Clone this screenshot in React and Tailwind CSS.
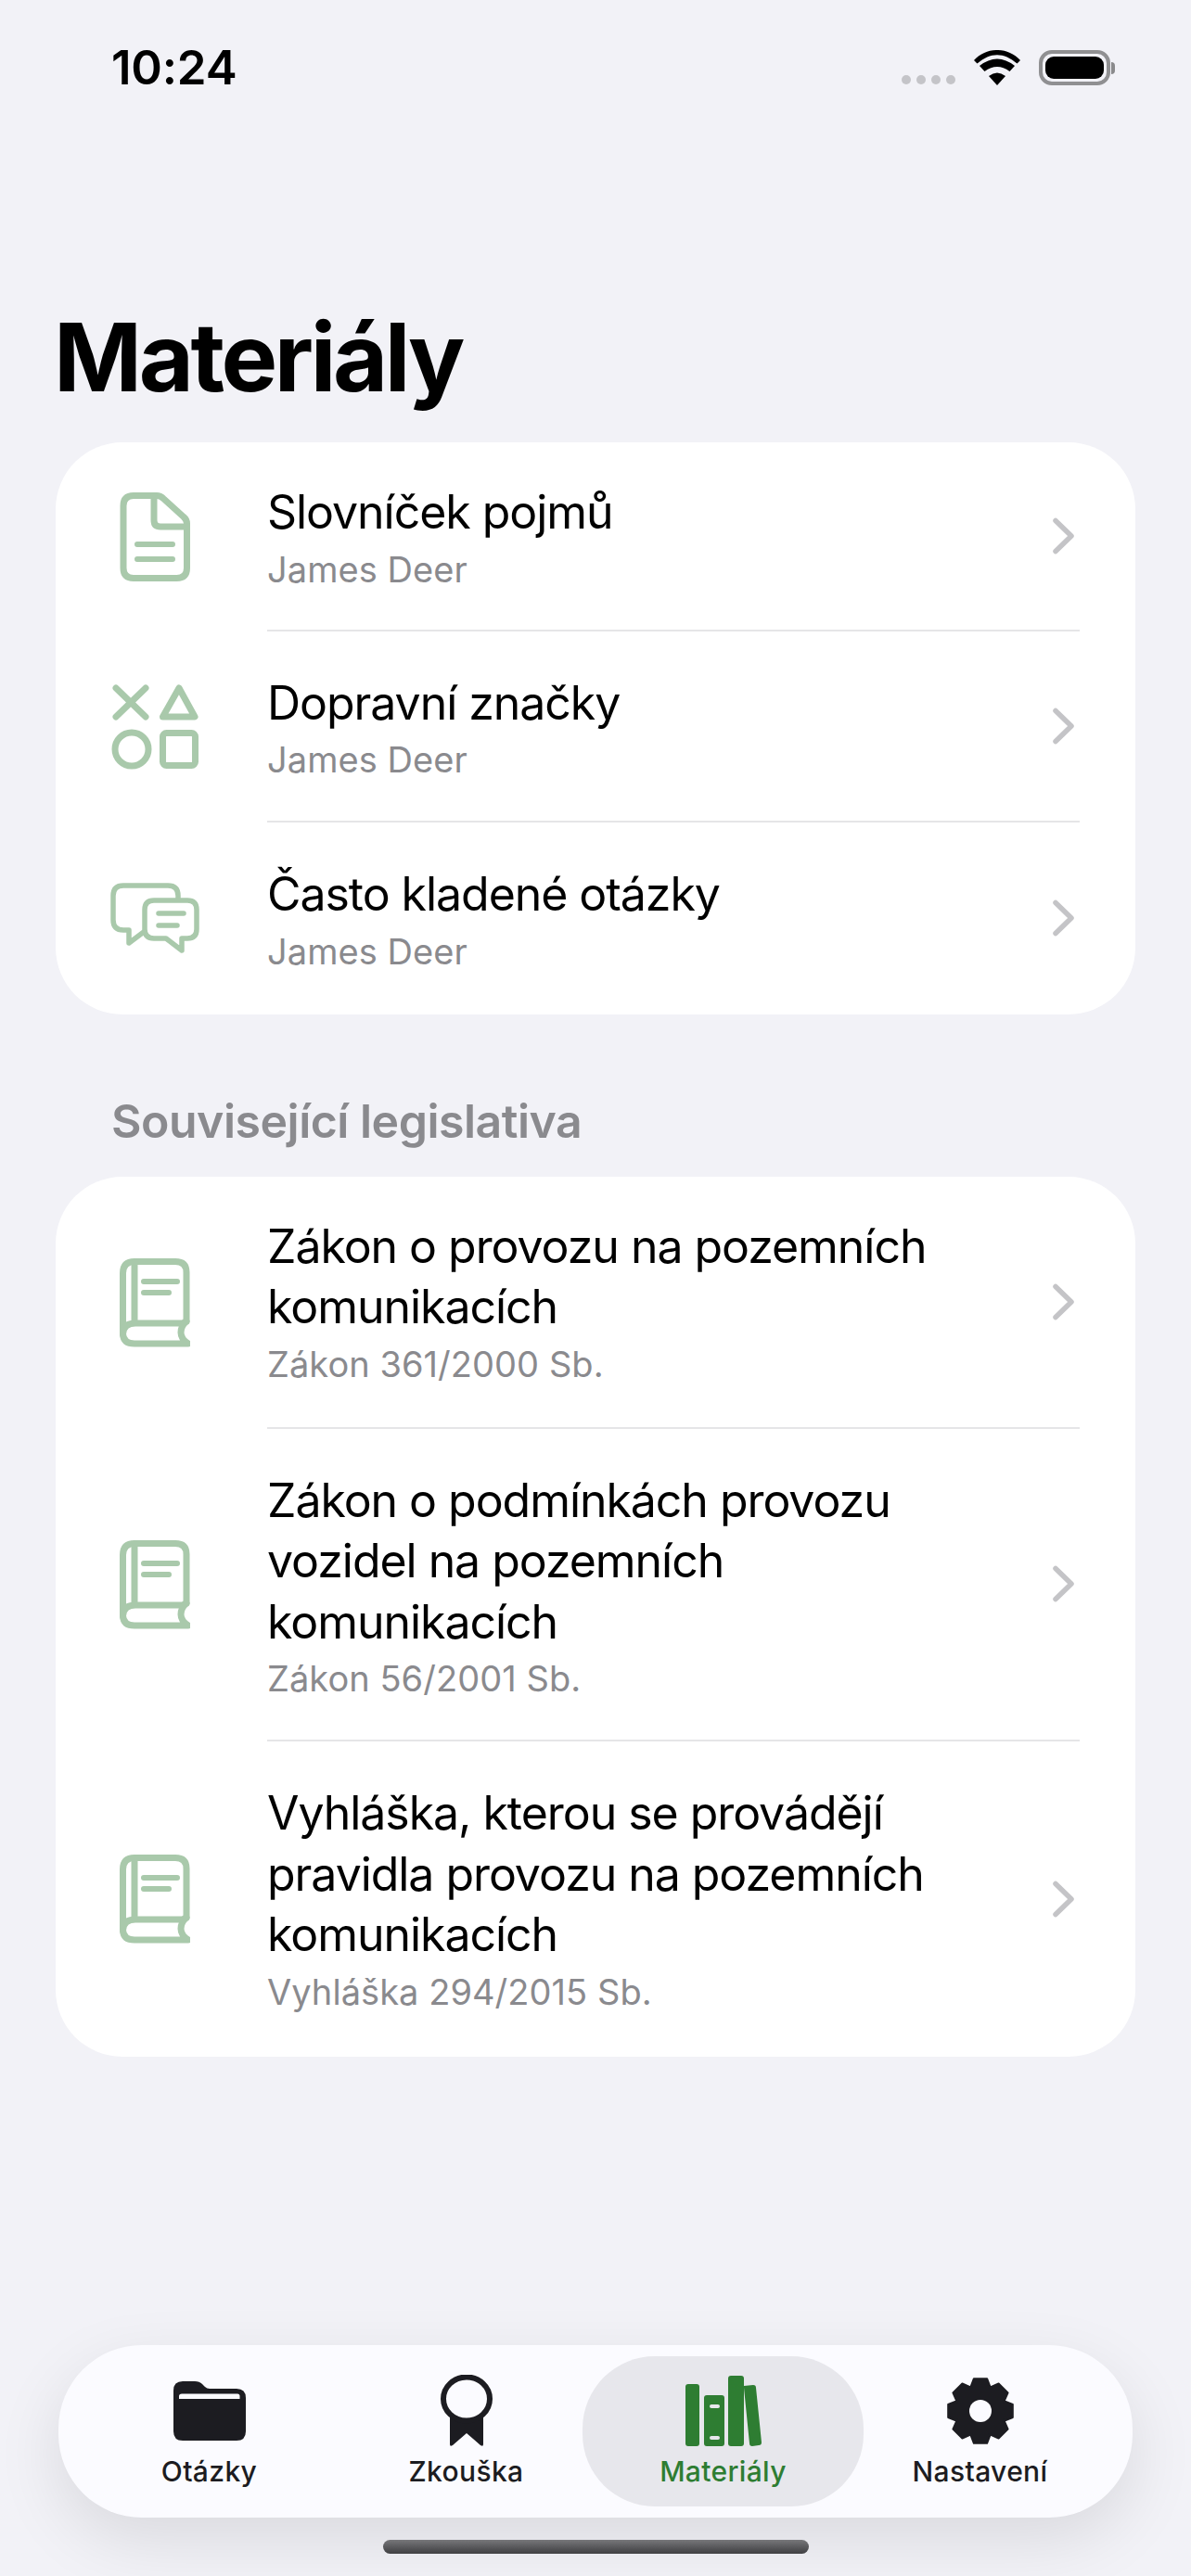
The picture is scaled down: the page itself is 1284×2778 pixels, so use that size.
import React from "react";

const sage = "#a9c9ab";

const DocIcon = () => (
  <svg width="76" height="96" viewBox="0 0 76 96" fill="none" stroke={sage} strokeWidth="7" strokeLinecap="round" strokeLinejoin="round">
    <path d="M15 3.500h25q4 0 7 3l22 20q3.500 3 3.500 7v48q0 11-11 11h-46.500q-11 0-11-11v-67q0-11 11-11z" />
    <path d="M37 4v26q0 7 7 7h28" />
    <path d="M19 56h38M19 72h38" strokeWidth="6" />
  </svg>
);

const ShapesIcon = () => (
  <svg width="94" height="92" viewBox="0 0 94 92" fill="none" stroke={sage} strokeWidth="7" strokeLinecap="round" strokeLinejoin="round">
    <path d="M5 4l32 31M37 4L5 35" />
    <path d="M73 4l17 31H55.500z" />
    <circle cx="22" cy="70" r="18" />
    <rect x="55.500" y="52.500" width="35" height="35" rx="4" />
  </svg>
);

const ChatIcon = () => (
  <svg width="96" height="76" viewBox="0 0 96 76" fill="none" stroke={sage} strokeWidth="5.500" strokeLinecap="round" strokeLinejoin="round">
    <path d="M73 17v-3q0-11-11-11H14Q3 3 3 14v26q0 11 11 11h6v14l16-12" />
    <path d="M47 19h36q10 0 10 10v21q0 10-10 10h-6v13L60 60H47q-10 0-10-10V29q0-10 10-10z" />
    <path d="M52 33h27M52 46h20" />
  </svg>
);

const BookIcon = () => (
  <svg width="76" height="96" viewBox="0 0 76 96" fill="none" stroke={sage} strokeWidth="7" strokeLinecap="round" strokeLinejoin="round">
    <path d="M72 68V15Q72 3.500 60 3.500H16Q3.500 3.500 3.500 16v66" />
    <path d="M72 68q-2 1-4 2H17q-13 0-13.500 11.500Q4 92 16 92h58q-8-5-8-12t6-12z" />
    <path d="M16 4v65" />
    <path d="M26 25h36M26 37h27" strokeWidth="6" />
  </svg>
);

const Chevron = () => (
  <svg width="25" height="40" viewBox="0 0 25 40" fill="none" stroke="#c4c4c7" strokeWidth="5.500" strokeLinecap="round" strokeLinejoin="round">
    <path d="M4 3.500L21 20 4 36.500" />
  </svg>
);

const FolderIcon = () => (
  <svg width="78" height="64" viewBox="0 0 78 64">
    <path fill="#1c1c21" d="M10 0h13q5 0 8 3l3 3q2 2 5 2h29q10 0 10 10v36q0 10-10 10H10Q0 64 0 54V10Q0 0 10 0z" />
    <path fill="#fbfbff" d="M9 13.500h60q2.500 0 2.500 2.500v3H6v-3q0-2.500 3-2.500z" />
  </svg>
);

const RibbonIcon = () => (
  <svg width="56" height="78" viewBox="0 0 56 78">
    <path fill="#1c1c21" d="M10 42h36v33q0 3-3 1L28 63 13 76q-3 2-3-1z" />
    <ellipse cx="28" cy="26" rx="25" ry="23.500" fill="#fbfbff" stroke="#1c1c21" strokeWidth="6" />
  </svg>
);

const BooksIcon = () => (
  <svg width="82" height="76" viewBox="0 0 82 76">
    <rect x="0" y="9" width="15" height="67" rx="3" fill="#2e7d32" />
    <path fill="#2e7d32" fillRule="evenodd" d="M23 21h16q3 0 3 3v49q0 3-3 3H23q-3 0-3-3V24q0-3 3-3zM28 31q-2 0-2 2t2 2h7q2 0 2-2t-2-2zM28 65q-2 0-2 2t2 2h7q2 0 2-2t-2-2z" />
    <rect x="46" y="0" width="17" height="76" rx="3" fill="#2e7d32" />
    <path fill="#2e7d32" d="M63 11l10-1q3 0 3 3l6 59q0 3-3 3l-7 1q-3 0-3-3l-6-60z" />
  </svg>
);

const gearPath = () => {
  // 8 zubu
  const pts = [];
  for (let i = 0; i < 8; i++) {
    const a = (i * Math.PI) / 4 - Math.PI / 2;
    [[27, -0.42], [35.500, -0.2], [35.500, 0.2], [27, 0.42]].forEach(([r, o]) => {
      pts.push(`${(37 + r * Math.cos(a + o)).toFixed(1)} ${(37 + r * Math.sin(a + o)).toFixed(1)}`);
    });
  }
  return "M" + pts.join("L") + "Z";
};

const GearIcon = () => (
  <svg width="74" height="74" viewBox="0 0 74 74">
    <path d={gearPath()} fill="#1c1c21" stroke="#1c1c21" strokeWidth="2" strokeLinejoin="round" />
    <circle cx="37" cy="37" r="12" fill="#fbfbff" />
  </svg>
);

const Row = ({ icon, title, sub, last, pad = "pt-[45px] pb-[42px]" }) => (
  <div className="flex items-center">
    <div className="w-[228px] shrink-0 flex justify-center pr-[14px]">{icon}</div>
    <div className={`flex-1 flex items-center mr-[60px] ${last ? "" : "border-b-2 border-[#e5e5e7]"}`}>
      <div className={`flex-1 ${pad}`}>
        {title.map((line) => (
          <div key={line} className="text-[50px] leading-[65.5px] text-black tracking-[-1.05px]">
            {line}
          </div>
        ))}
        <div className="text-[38px] leading-[47px] text-[#8a8a8e] mt-[5px] tracking-[0.05px]">{sub}</div>
      </div>
      <div className="mr-[5px]">
        <Chevron />
      </div>
    </div>
  </div>
);

const Tab = ({ icon, label, active }) => (
  <div className={`flex flex-col items-center pt-[19px] ${active ? "mx-[-13px] bg-[#e7e7ec] rounded-[78px]" : ""}`}>
    <div className="h-[80px] flex items-center justify-center">{icon}</div>
    <div className={`text-[30px] leading-[36px] font-medium tracking-[0.35px] mt-[7px] ${active ? "text-[#2e7d32]" : "text-[#1c1c21]"}`}>
      {label}
    </div>
  </div>
);

export default function App() {
  return (
    <div className="relative h-[2778px] bg-[#f2f2f7] overflow-hidden" style={{ fontFamily: "Inter, 'Liberation Sans', sans-serif" }}>
      <div className="flex items-center justify-between pl-[120px] pr-[82px] pt-[44px] h-[102px]">
        <div className="text-[51px] leading-[60px] font-semibold text-black tracking-[-0.2px]">10:24</div>
        <div className="flex items-center">
          <div className="flex gap-[6px] mt-[26px] mr-[20px]">
            {[0, 1, 2, 3].map((d) => (
              <div key={d} className="w-[10px] h-[10px] rounded-full bg-[#c4c4c8]" />
            ))}
          </div>
          <svg width="50" height="38" viewBox="0 0 50 38" className="mr-[20px]">
            <path d="M25 38l-9-10q9-7 18 0z" fill="#000" />
            <path d="M11.500 23L6 17q19-15 38 0l-5.500 6q-13.500-10-27 0z" fill="#000" />
            <path d="M3.500 14.500L0 11C14-3.700 36-3.700 50 11l-3.500 3.500C32 2 18 2 3.500 14.500z" fill="#000" />
          </svg>
          <div className="w-[77px] h-[38px] rounded-[14px] border-[4px] border-[#909092] p-[3px]">
            <div className="w-full h-full rounded-[9px] bg-black" />
          </div>
          <div className="w-[4px] h-[13px] rounded-r-full bg-[#8a8a8c] ml-[1px]" />
        </div>
      </div>

      <h1 className="text-[102px] leading-[124px] font-bold text-black tracking-[-3.4px] pl-[58px] mt-[221px]">Materiály</h1>

      <div className="mx-[60px] mt-[30px] bg-white rounded-[72px] overflow-hidden">
        <Row icon={<DocIcon />} title={["Slovníček pojmů"]} sub="James Deer" pad="pt-[43px] pb-[41px]" />
        <Row icon={<ShapesIcon />} title={["Dopravní značky"]} sub="James Deer" />
        <Row icon={<ChatIcon />} title={["Často kladené otázky"]} sub="James Deer" last pad="pt-[45px] pb-[44px]" />
      </div>

      <div className="pl-[120px] mt-[85px] text-[50px] leading-[60px] font-semibold text-[#8a8a8e] tracking-[-0.5px]">
        Související legislativa
      </div>

      <div className="mx-[60px] mt-[30px] bg-white rounded-[72px] overflow-hidden">
        <Row icon={<BookIcon />} title={["Zákon o provozu na pozemních", "komunikacích"]} sub="Zákon 361/2000 Sb." pad="pt-[43px] pb-[44px]" />
        <Row icon={<BookIcon />} title={["Zákon o podmínkách provozu", "vozidel na pozemních", "komunikacích"]} sub="Zákon 56/2001 Sb." />
        <Row icon={<BookIcon />} title={["Vyhláška, kterou se provádějí", "pravidla provozu na pozemních", "komunikacích"]} sub="Vyhláška 294/2015 Sb." last pad="pt-[45px] pb-[46px]" />
      </div>

      <div className="absolute left-[63px] top-[2529px] w-[1158px] h-[186px] rounded-[90px] bg-[#fbfbff] shadow-[0_24px_70px_rgba(0,0,0,0.1)] grid grid-cols-[repeat(4,277px)] py-[12px] pl-[24px]">
        <Tab icon={<FolderIcon />} label="Otázky" />
        <Tab icon={<RibbonIcon />} label="Zkouška" />
        <Tab icon={<BooksIcon />} label="Materiály" active />
        <Tab icon={<GearIcon />} label="Nastavení" />
      </div>

      <div className="absolute left-[413px] top-[2739px] w-[459px] h-[15px] rounded-full bg-gradient-to-b from-[#77777a] to-[#3f3f42]" />
    </div>
  );
}
